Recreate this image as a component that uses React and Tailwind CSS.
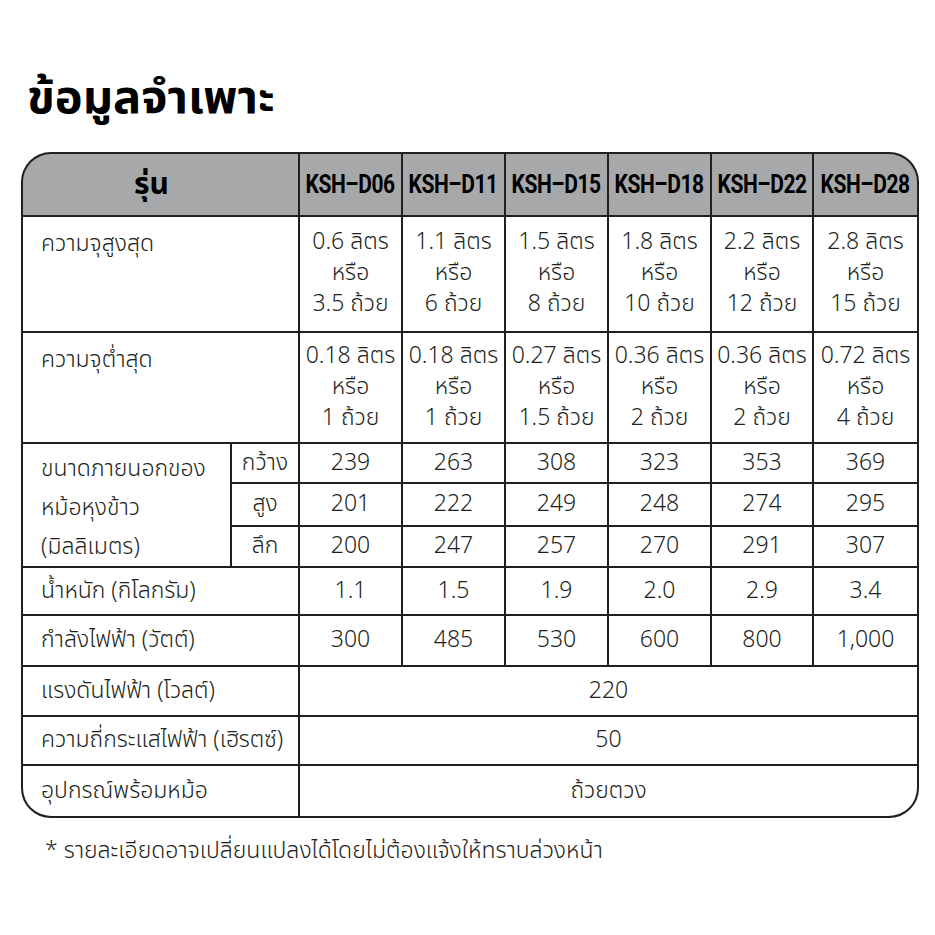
import React from "react";

const models = ["KSH–D06", "KSH–D11", "KSH–D15", "KSH–D18", "KSH–D22", "KSH–D28"];
const maxCap = [
  ["0.6 ลิตร", "3.5 ถ้วย"],
  ["1.1 ลิตร", "6 ถ้วย"],
  ["1.5 ลิตร", "8 ถ้วย"],
  ["1.8 ลิตร", "10 ถ้วย"],
  ["2.2 ลิตร", "12 ถ้วย"],
  ["2.8 ลิตร", "15 ถ้วย"],
];
const minCap = [
  ["0.18 ลิตร", "1 ถ้วย"],
  ["0.18 ลิตร", "1 ถ้วย"],
  ["0.27 ลิตร", "1.5 ถ้วย"],
  ["0.36 ลิตร", "2 ถ้วย"],
  ["0.36 ลิตร", "2 ถ้วย"],
  ["0.72 ลิตร", "4 ถ้วย"],
];
const width = ["239", "263", "308", "323", "353", "369"];
const height = ["201", "222", "249", "248", "274", "295"];
const depth = ["200", "247", "257", "270", "291", "307"];
const weight = ["1.1", "1.5", "1.9", "2.0", "2.9", "3.4"];
const power = ["300", "485", "530", "600", "800", "1,000"];

const thai = { fontFamily: '"Noto Sans Thai", "Noto Sans", "DejaVu Sans", sans-serif' };
const narrow = { fontFamily: '"Roboto", "Liberation Sans", sans-serif' };

function Cap({ v, pt }) {
  return (
    <div className={"bg-white flex flex-col items-center text-[23px] leading-[31px] font-light text-[#231f20] " + pt}>
      <span className="whitespace-nowrap">{v[0]}</span>
      <span className="whitespace-nowrap">หรือ</span>
      <span className="whitespace-nowrap">{v[1]}</span>
    </div>
  );
}

function Num({ v }) {
  return (
    <div className="bg-white flex items-center justify-center text-[23px] font-light text-[#231f20]">{v}</div>
  );
}

function Label({ children, top }) {
  return (
    <div
      className={
        "col-span-2 bg-white flex pl-[18px] text-[23px] font-light text-[#231f20] whitespace-nowrap " +
        (top ? "items-start pt-[10px]" : "items-center")
      }
    >
      {children}
    </div>
  );
}

function Wide({ v }) {
  return (
    <div className="col-span-6 bg-white flex items-center justify-center text-[23px] font-light text-[#231f20]">{v}</div>
  );
}

export default function App() {
  return (
    <div className="w-[935px] h-[935px] bg-white" style={thai}>
      <div className="pl-[21px] pt-[70px]">
        <h1 className="ml-[6px] text-[47px] font-bold leading-[58px] text-black">ข้อมูลจำเพาะ</h1>
        <div className="mt-[24px] w-[898px] rounded-[30px] border-2 border-[#231f20] bg-[#231f20] overflow-hidden">
          <div className="grid gap-[2px] grid-cols-[207px_66px_101px_101px_101px_101px_100px_103px] grid-rows-[61px_114px_109px_38px_41px_39px_46px_49px_48px_47px_50px]">
            {/* header */}
            <div className="col-span-2 bg-[#a7a8aa] flex items-center justify-center pr-[18px] pt-[2px] text-[30px] font-bold text-black">
              รุ่น
            </div>
            {models.map((m) => (
              <div
                key={m}
                className="bg-[#a7a8aa] flex items-center justify-center overflow-hidden"
              >
                <span
                  className="inline-block whitespace-nowrap text-[25px] font-bold text-black scale-x-[0.84] tracking-[-0.5px]"
                  style={narrow}
                >
                  {m}
                </span>
              </div>
            ))}

            {/* max capacity */}
            <Label top>ความจุสูงสุด</Label>
            {maxCap.map((v, i) => (
              <Cap key={i} v={v} pt="pt-[10px]" />
            ))}

            {/* min capacity */}
            <Label top>ความจุต่ำสุด</Label>
            {minCap.map((v, i) => (
              <Cap key={i} v={v} pt="pt-[8px]" />
            ))}

            {/* dimensions */}
            <div className="row-span-3 bg-white pl-[18px] pt-[6px] text-[23px] leading-[39px] font-light text-[#231f20] whitespace-nowrap">
              <div>ขนาดภายนอกของ</div>
              <div>หม้อหุงข้าว</div>
              <div>(มิลลิเมตร)</div>
            </div>
            <Num v="กว้าง" />
            {width.map((v, i) => (
              <Num key={i} v={v} />
            ))}
            <Num v="สูง" />
            {height.map((v, i) => (
              <Num key={i} v={v} />
            ))}
            <Num v="ลึก" />
            {depth.map((v, i) => (
              <Num key={i} v={v} />
            ))}

            <Label>น้ำหนัก (กิโลกรัม)</Label>
            {weight.map((v, i) => (
              <Num key={i} v={v} />
            ))}

            <Label>กำลังไฟฟ้า (วัตต์)</Label>
            {power.map((v, i) => (
              <Num key={i} v={v} />
            ))}

            <Label>แรงดันไฟฟ้า (โวลต์)</Label>
            <Wide v="220" />

            <Label>ความถี่กระแสไฟฟ้า (เฮิรตซ์)</Label>
            <Wide v="50" />

            <Label>อุปกรณ์พร้อมหม้อ</Label>
            <Wide v="ถ้วยตวง" />
          </div>
        </div>
        <p className="mt-[16px] ml-[24px] text-[23px] font-light text-[#231f20]">* รายละเอียดอาจเปลี่ยนแปลงได้โดยไม่ต้องแจ้งให้ทราบล่วงหน้า</p>
      </div>
    </div>
  );
}
